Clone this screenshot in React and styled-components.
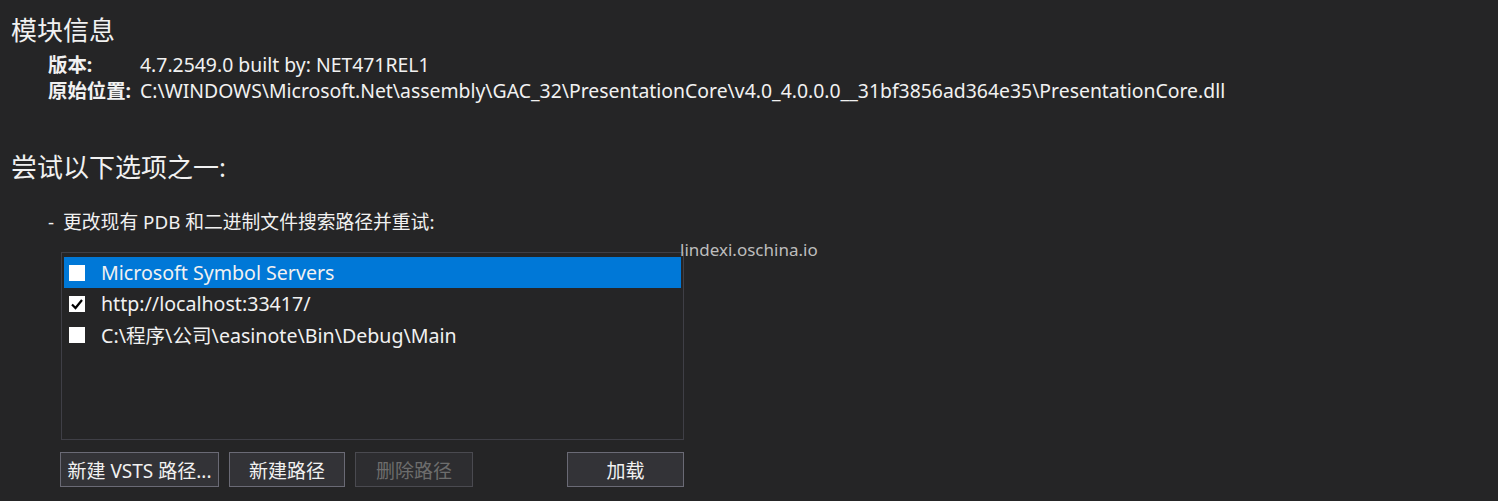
import React from "react";
import styled, { createGlobalStyle } from "styled-components";

const GlobalStyle = createGlobalStyle`
    html, body {
        margin: 0;
        padding: 0;
        background-color: #252526;
    }
    body {
        font-family: "Noto Sans", "Noto Sans CJK SC", sans-serif;
        color: #f1f1f1;
    }
`;

const Page = styled.div`
    width: 1498px;
    height: 501px;
    overflow: hidden;
    background-color: #252526;
    padding: 14px 0 0 11px;
    box-sizing: border-box;
    position: relative;
`;

const Heading = styled.h2`
    margin: 0;
    font-size: 26px;
    font-weight: normal;
    line-height: 32px;
    color: #f1f1f1;
    white-space: nowrap;
`;

const InfoGrid = styled.div`
    display: grid;
    grid-template-columns: 92px auto;
    margin: 6px 0 0 37px;
    font-size: 19.4px;
    line-height: 26px;
`;

const InfoLabel = styled.div`
    font-weight: bold;
    color: #f1f1f1;
    white-space: nowrap;
`;

const InfoValue = styled.div`
    color: #f1f1f1;
    white-space: nowrap;
`;

const Section = styled.div`
    margin-top: ${({ top }) => top}px;
`;

const Option = styled.div`
    margin: 26px 0 0 37px;
    font-size: 18.8px;
    line-height: 26px;
    color: #f1f1f1;
    display: flex;
    gap: 9px;
    white-space: nowrap;
`;

const ListBox = styled.div`
    margin: 17px 0 0 50px;
    width: 623px;
    height: 188px;
    box-sizing: border-box;
    border: 1px solid #3f3f46;
    padding: 4px 2px;
`;

const Row = styled.div`
    height: 31px;
    display: flex;
    align-items: center;
    padding-left: 5px;
    gap: 16px;
    font-size: 19.6px;
    color: #f1f1f1;
    white-space: nowrap;
    background-color: ${({ selected }) => (selected ? "#0078d7" : "transparent")};
`;

const Check = styled.span`
    width: 16px;
    height: 16px;
    background-color: #ffffff;
    display: inline-flex;
    align-items: center;
    justify-content: center;
    flex-shrink: 0;
`;

const ButtonBar = styled.div`
    display: flex;
    margin: 12px 0 0 49px;
    width: 624px;
    gap: 10px;
`;

const Button = styled.div`
    height: 35px;
    width: ${({ w }) => w}px;
    box-sizing: border-box;
    border: 1px solid ${({ disabled }) => (disabled ? "#4a4a50" : "#6a6a75")};
    background-color: ${({ disabled }) => (disabled ? "#2d2d30" : "#333337")};
    color: ${({ disabled }) => (disabled ? "#6d6d6d" : "#f1f1f1")};
    font-size: 19px;
    display: flex;
    align-items: center;
    justify-content: center;
    white-space: nowrap;
    overflow: hidden;
    margin-left: ${({ push }) => (push ? "auto" : "0")};
`;

const Watermark = styled.div`
    position: absolute;
    left: 680px;
    top: 238px;
    font-size: 17px;
    color: #bdbdbd;
    font-family: "Noto Sans", sans-serif;
`;

function CheckMark() {
    return (
        <svg width="14" height="14" viewBox="0 0 14 14">
            <path d="M2 7.5 L5.5 11 L12 3" fill="none" stroke="#000" strokeWidth="2.2" />
        </svg>
    );
}

const servers = [
    { name: "Microsoft Symbol Servers", checked: false, selected: true },
    { name: "http://localhost:33417/", checked: true },
    { name: "C:\\程序\\公司\\easinote\\Bin\\Debug\\Main", checked: false }
];

export default function App() {
    return (
        <>
            <GlobalStyle />
            <Page>
                <Heading>模块信息</Heading>
                <InfoGrid>
                    <InfoLabel>版本:</InfoLabel>
                    <InfoValue>4.7.2549.0 built by: NET471REL1</InfoValue>
                    <InfoLabel>原始位置:</InfoLabel>
                    <InfoValue>
                        C:\WINDOWS\Microsoft.Net\assembly\GAC_32\PresentationCore\v4.0_4.0.0.0__31bf3856ad364e35\PresentationCore.dll
                    </InfoValue>
                </InfoGrid>
                <Section top={47}>
                    <Heading>尝试以下选项之一:</Heading>
                    <Option>
                        <span>-</span>
                        <span>更改现有 PDB 和二进制文件搜索路径并重试:</span>
                    </Option>
                    <ListBox>
                        {servers.map(s => (
                            <Row key={s.name} selected={s.selected}>
                                <Check>{s.checked && <CheckMark />}</Check>
                                <span>{s.name}</span>
                            </Row>
                        ))}
                    </ListBox>
                    <ButtonBar>
                        <Button w={159}>新建 VSTS 路径...</Button>
                        <Button w={116}>新建路径</Button>
                        <Button w={118} disabled>删除路径</Button>
                        <Button w={117} push>加载</Button>
                    </ButtonBar>
                </Section>
                <Watermark>lindexi.oschina.io</Watermark>
            </Page>
        </>
    );
}
